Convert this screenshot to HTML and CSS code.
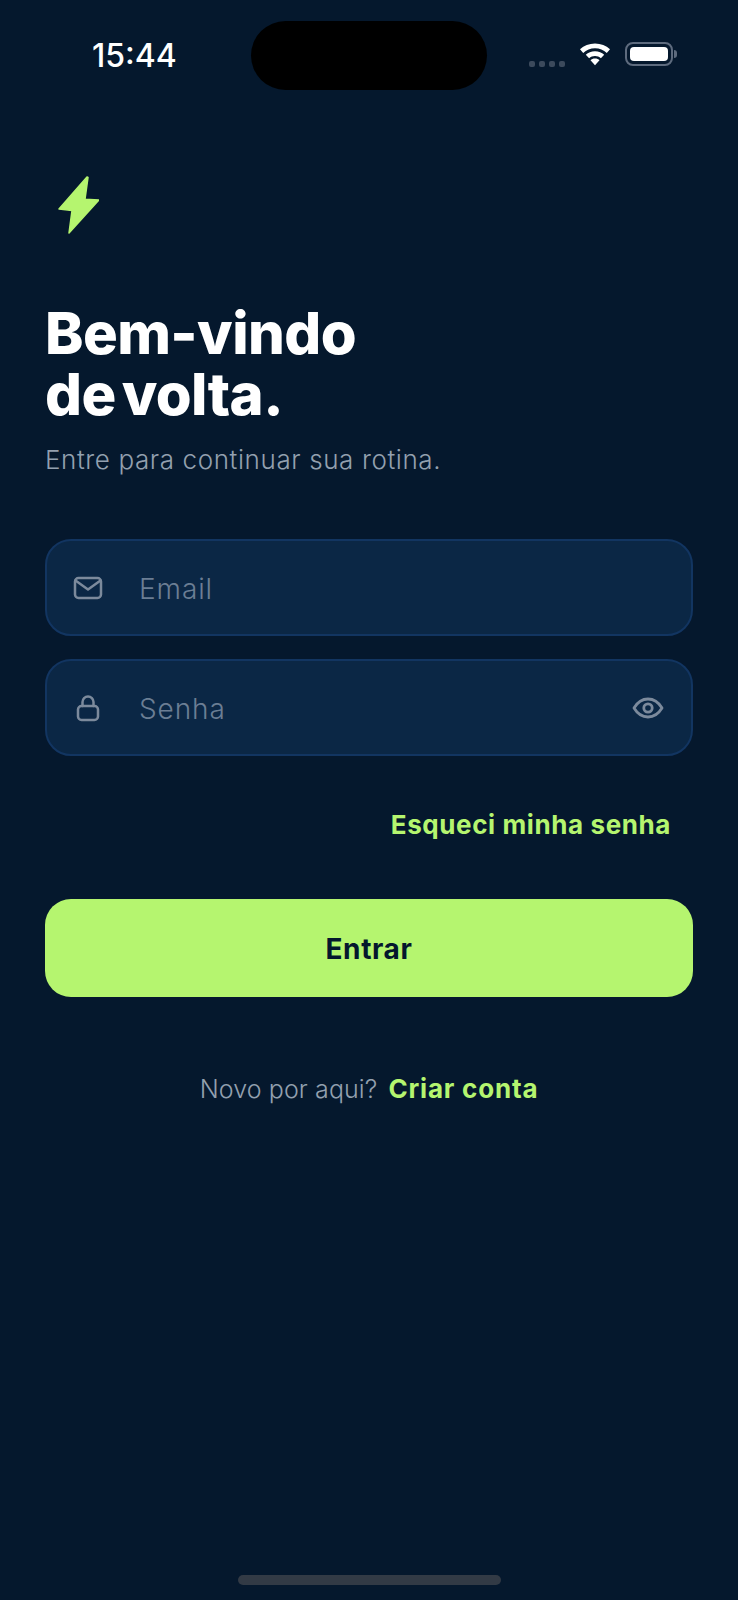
FILE: index.html
```html
<!DOCTYPE html>
<html lang="pt">
<head>
<meta charset="utf-8">
<title>Entrar</title>
<link rel="stylesheet" href="styles.css">
</head>
<body>
<main class="screen">
  <div class="island"></div>
  <header class="status">
    <span class="time">15:44</span>
    <div class="status-icons">
      <div class="signal"><i></i><i></i><i></i><i></i></div>
      <svg class="wifi" viewBox="0 0 32 24"><path d="M16 1.5C10 1.5 5 3.6 1 7.3l3.2 3.6C7.400 8 11.400 6.300 16 6.300s8.600 1.700 11.800 4.600L31 7.300C27 3.600 22 1.500 16 1.500z"/><path d="M16 9.200c-3.700 0-6.800 1.300-9.200 3.500l3.300 3.600c1.600-1.400 3.600-2.300 5.900-2.300s4.300.9 5.900 2.300l3.300-3.600c-2.400-2.200-5.500-3.500-9.200-3.500z"/><path d="M16 16.500c-1.900 0-3.400.6-4.500 1.700l4.500 5 4.500-5c-1.100-1.100-2.600-1.700-4.500-1.700z"/></svg>
      <div class="battery"><div class="battery-fill"></div></div>
      <div class="battery-nub"></div>
    </div>
  </header>

  <svg class="bolt" viewBox="0 0 41 58"><path d="M29 1 1 33l13 1.500L11 57 41 24l-14-.8L30 1.500z"/></svg>

  <h1 class="title">Bem-vindo<br>de volta.</h1>
  <p class="subtitle">Entre para continuar sua rotina.</p>

  <form class="form">
    <label class="field">
      <svg class="field-icon" viewBox="0 0 30 24"><rect x="2" y="2" width="26" height="20" rx="3.500"/><path d="m2.500 4.500 12.500 9 12.500-9"/></svg>
      <span class="placeholder">Email</span>
    </label>
    <label class="field">
      <svg class="field-icon" viewBox="0 0 30 28"><rect x="5" y="12" width="20" height="14" rx="3.500"/><path d="M9.500 12V8a5.500 5.500 0 0 1 11 0v4"/></svg>
      <span class="placeholder">Senha</span>
      <svg class="eye" viewBox="0 0 32 22"><path d="M2 11c3.500-5.800 8.200-9 14-9s10.500 3.200 14 9c-3.500 5.800-8.200 9-14 9S5.500 16.800 2 11z"/><circle cx="16" cy="11" r="4.200"/></svg>
    </label>
  </form>

  <div class="forgot-row"><a class="forgot">Esqueci minha senha</a></div>
  <button class="submit" type="button">Entrar</button>
  <p class="signup"><span class="signup-q">Novo por aqui?</span><a class="signup-link">Criar conta</a></p>

  <div class="home-bar"></div>
</main>
</body>
</html>
```
FILE: styles.css
```css
* { box-sizing: border-box; }
html, body { margin: 0; padding: 0; }
body { background: #05182d; font-family: "Inter", "Noto Sans", sans-serif; }

.screen {
  position: relative;
  width: 738px;
  height: 1600px;
  padding: 0 45px;
  background: #05182d;
  overflow: hidden;
}
.island {
  position: absolute;
  left: 251px;
  top: 21px;
  width: 236px;
  height: 69px;
  border-radius: 35px;
  background: #000;
}
.status {
  display: flex;
  justify-content: space-between;
  align-items: flex-start;
  height: 176px;
  padding: 38px 16px 0 47px;
}
.time {
  margin-top: 1px;
  font-family: "Inter", sans-serif;
  font-size: 32px;
  line-height: 34px;
  font-weight: 500;
  color: #fff;
}
.status-icons { display: flex; align-items: flex-start; padding-top: 4px; }
.signal { display: flex; gap: 4px; margin: 19px 14px 0 0; }
.signal i { width: 6px; height: 6px; border-radius: 2px; background: #3c4a5c; }
.wifi { width: 32px; height: 24px; fill: #fff; margin-right: 14px; }
.battery {
  width: 48px;
  height: 24px;
  padding: 3px;
  border: 2px solid #5e6b7e;
  border-radius: 8px;
}
.battery-fill { width: 100%; height: 100%; border-radius: 4px; background: #fff; }
.battery-nub {
  width: 3px;
  height: 8px;
  margin: 8px 0 0 1px;
  border-radius: 0 3px 3px 0;
  background: #5e6b7e;
}

.bolt { display: block; width: 41px; height: 58px; margin-left: 13px; fill: #b5f56f; stroke: #b5f56f; stroke-width: 1.500; stroke-linejoin: round; }

.title {
  margin: 69px 0 0;
  font-size: 58px;
  line-height: 61px;
  font-weight: 800;
  letter-spacing: -0.600px;
  word-spacing: -6px;
  color: #fff;
}
.subtitle {
  margin: 17px 0 0;
  font-size: 26px;
  line-height: 36px;
  font-weight: 300;
  letter-spacing: 0.600px;
  color: #93a0af;
}

.form { display: flex; flex-direction: column; gap: 23px; margin-top: 61px; }
.field {
  display: flex;
  align-items: center;
  height: 97px;
  padding: 0 27px 0 26px;
  border: 2px solid #123561;
  border-radius: 26px;
  background: #0b2745;
}
.field-icon { width: 30px; height: 28px; flex: none; fill: none; stroke: #7c8a9c; stroke-width: 2.500; stroke-linecap: round; stroke-linejoin: round; }
.placeholder { margin: 2px 0 0 36px; font-size: 28px; font-weight: 300; letter-spacing: 0.900px; color: #6b7e94; }
.eye { width: 32px; height: 22px; margin-left: auto; fill: none; stroke: #7c8a9c; stroke-width: 2.800; stroke-linejoin: round; }

.forgot-row { display: flex; justify-content: flex-end; margin-top: 52px; padding-right: 22px; }
.forgot { font-size: 26px; line-height: 34px; font-weight: 700; letter-spacing: 0.600px; color: #b5f56f; }

.submit {
  display: block;
  width: 100%;
  height: 98px;
  margin-top: 57px;
  padding: 2px 0 0;
  border: 0;
  border-radius: 26px;
  background: #b5f56f;
  font-family: inherit;
  font-size: 28px;
  font-weight: 700;
  letter-spacing: 0.600px;
  color: #04172d;
}

.signup {
  display: flex;
  justify-content: center;
  align-items: baseline;
  gap: 11px;
  margin: 74px 0 0;
  font-size: 26px;
  line-height: 36px;
}
.signup-q { font-size: 25px; font-weight: 300; letter-spacing: 0.100px; color: #93a0af; }
.signup-link { font-weight: 700; letter-spacing: 0.800px; color: #b5f56f; }

.home-bar {
  position: absolute;
  left: 238px;
  top: 1575px;
  width: 263px;
  height: 10px;
  border-radius: 5px;
  background: #323a45;
}
```
